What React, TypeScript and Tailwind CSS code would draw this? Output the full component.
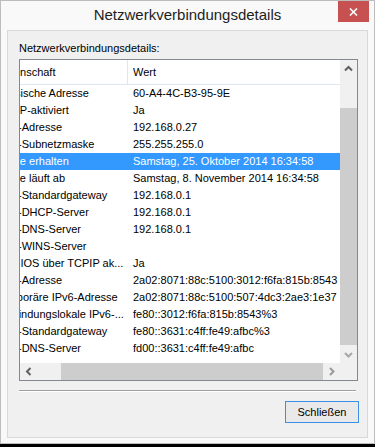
import React from "react";

const rows: [string, string][] = [
  ["Physische Adresse", "60-A4-4C-B3-95-9E"],
  ["DHCP-aktiviert", "Ja"],
  ["IPv4-Adresse", "192.168.0.27"],
  ["IPv4-Subnetzmaske", "255.255.255.0"],
  ["Lease erhalten", "Samstag, 25. Oktober 2014 16:34:58"],
  ["Lease läuft ab", "Samstag, 8. November 2014 16:34:58"],
  ["IPv4-Standardgateway", "192.168.0.1"],
  ["IPv4-DHCP-Server", "192.168.0.1"],
  ["IPv4-DNS-Server", "192.168.0.1"],
  ["IPv4-WINS-Server", ""],
  ["NetBIOS über TCPIP ak...", "Ja"],
  ["IPv6-Adresse", "2a02:8071:88c:5100:3012:f6fa:815b:8543"],
  ["Temporäre IPv6-Adresse", "2a02:8071:88c:5100:507:4dc3:2ae3:1e37"],
  ["Verbindungslokale IPv6-...", "fe80::3012:f6fa:815b:8543%3"],
  ["IPv6-Standardgateway", "fe80::3631:c4ff:fe49:afbc%3"],
  ["IPv6-DNS-Server", "fd00::3631:c4ff:fe49:afbc"],
];

function Chevron({ dir, color }: { dir: "up" | "down" | "left" | "right"; color: string }) {
  const pts: Record<string, string> = {
    up: "1,5.5 4.5,2 8,5.5",
    down: "1,2 4.5,5.5 8,2",
    left: "5.5,1 2,4.5 5.5,8",
    right: "2,1 5.5,4.5 2,8",
  };
  const vertical = dir === "up" || dir === "down";
  return (
    <svg width={vertical ? 9 : 7} height={vertical ? 7 : 9} viewBox={vertical ? "0 0 9 7" : "0 0 7 9"}>
      <polyline points={pts[dir]} fill="none" stroke={color} strokeWidth={2} />
    </svg>
  );
}

export default function App() {
  return (
    <div
      className="w-[375px] h-[447px] bg-black flex flex-col"
      style={{ fontFamily: '"Liberation Sans", Arial, sans-serif' }}
    >
      <div className="h-[444px] border border-[#bdbdbd] bg-[#f9f9f9] flex flex-col">
        {/* title bar */}
        <div className="h-[29px] grid grid-cols-[31px_1fr_31px] px-[5px]">
          <div />
          <div className="text-center text-[15px] leading-[20px] mt-[4px] text-[#1e1e1e] whitespace-nowrap">
            Netzwerkverbindungsdetails
          </div>
          <div className="h-[21px] bg-[#c75050] flex items-center justify-center">
            <svg width="9" height="8" viewBox="0 0 9 8">
              <path d="M1 0.5 L8 7.5 M8 0.5 L1 7.5" stroke="#ffffff" strokeWidth={1.6} />
            </svg>
          </div>
        </div>
        {/* content */}
        <div className="flex-1 mx-[6px] mb-[5px] border border-[#d9d9d9] bg-[#f0f0f0] flex flex-col text-[11px] text-black">
          <div className="mt-[11px] ml-[11px] leading-[13px]">Netzwerkverbindungsdetails:</div>
          <div className="mt-[4px] ml-[11px] w-[339px] h-[322px] border border-[#828790] bg-white flex">
            <div className="w-[320px] flex flex-col">
              <div className="h-[303px] overflow-hidden">
                <div className="w-[348px] -ml-[28px]">
                  <div className="h-[25px] flex border-b border-[#dde8f6]">
                    <div className="w-[136px] border-r border-[#e5e5e5] pl-[6px] flex items-center whitespace-nowrap">
                      Eigenschaft
                    </div>
                    <div className="pl-[5px] flex items-center">Wert</div>
                  </div>
                  {rows.map(([k, v], i) => (
                    <div
                      key={i}
                      className={
                        "h-[17px] leading-[17px] flex whitespace-nowrap " +
                        (i === 4 ? "bg-[#3399ff] text-white" : "")
                      }
                    >
                      <div className="w-[136px] shrink-0 pl-[4px] overflow-hidden">{k}</div>
                      <div className="pl-[5px]">{v}</div>
                    </div>
                  ))}
                </div>
              </div>
              {/* horizontal scrollbar */}
              <div className="h-[17px] flex bg-[#f0f0f0]">
                <div className="w-[17px] flex items-center justify-center">
                  <Chevron dir="left" color="#606060" />
                </div>
                <div className="w-[24px]" />
                <div className="flex-1 bg-[#cdcdcd]" />
                <div className="w-[17px] flex items-center justify-center">
                  <Chevron dir="right" color="#9a9a9a" />
                </div>
              </div>
            </div>
            {/* vertical scrollbar */}
            <div className="w-[17px] flex flex-col bg-[#f0f0f0]">
              <div className="h-[17px] flex items-center justify-center">
                <Chevron dir="up" color="#606060" />
              </div>
              <div className="h-[31px]" />
              <div className="h-[237px] bg-[#cdcdcd]" />
              <div className="h-[18px] flex items-center justify-center">
                <Chevron dir="down" color="#a8a8a8" />
              </div>
              <div className="h-[17px]" />
            </div>
          </div>
          <div className="mt-[9px] ml-[11px] w-[337px] border-t border-[#a0a0a0] border-b border-b-white" />
          <div className="mt-[9px] mr-[8px] self-end w-[74px] h-[22px] border border-[#3c8ee6] bg-[#e9e9e9] flex items-center justify-center">
            Schließen
          </div>
        </div>
      </div>
    </div>
  );
}
